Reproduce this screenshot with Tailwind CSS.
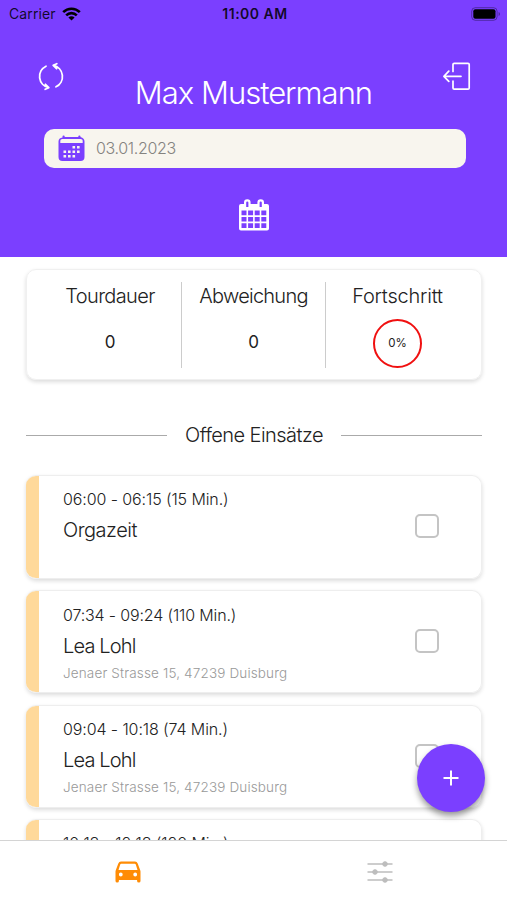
<!DOCTYPE html>
<html lang="de">
<head>
    <meta charset="UTF-8">
    <meta name="viewport" content="width=device-width, initial-scale=1.0">
    <script src="https://cdn.jsdelivr.net/npm/@tailwindcss/browser@4"></script>
    <title>Tour</title>
</head>
<body class="bg-white font-['Inter','Liberation_Sans',sans-serif] text-[#222]">
    <div class="relative flex flex-col w-[507px] h-[900px] overflow-hidden">

        <!-- Header -->
        <header class="shrink-0 h-[257px] bg-[#7b3fff] text-white">
            <div class="grid grid-cols-3 items-center h-[27px] pl-[9px] pr-[6px] text-black/85 text-[14px]">
                <div class="flex items-center gap-1.5">
                    <span class="whitespace-nowrap tracking-[0.1px]">Carrier</span>
                    <svg class="w-[19px] h-[14px]" viewBox="0 0 19 14" fill="none" stroke="#000" stroke-width="2.6">
                        <path d="M1.2 5.2a11.8 11.8 0 0 1 16.6 0M4.2 8.3a7.5 7.5 0 0 1 10.6 0"/>
                        <path d="M9.5 13.6 6.4 10.5a4.4 4.4 0 0 1 6.2 0z" fill="#000" stroke="none"/>
                    </svg>
                </div>
                <span class="text-center font-semibold tracking-[0.5px] whitespace-nowrap">11:00 AM</span>
                <svg class="justify-self-end w-[30px] h-[14px]" viewBox="0 0 30 14">
                    <rect x=".7" y=".7" width="25.4" height="12.6" rx="3.6" fill="none" stroke="#000" stroke-opacity=".35"/>
                    <rect x="2.3" y="2.3" width="22.2" height="9.4" rx="2" fill="#000"/>
                    <path d="M27.6 5v4c1.8-.8 1.8-3.2 0-4z" fill="#000" fill-opacity=".4"/>
                </svg>
            </div>

            <div class="flex justify-between h-[102px] pl-[38px] pr-[36px] pt-[35px]">
                <svg class="w-[26px] h-[29px]" viewBox="0 0 26 29" fill="none" stroke="#fff" stroke-width="1.8" stroke-linecap="round" stroke-linejoin="round">
                    <path d="M8 4.2A11.4 11.4 0 0 0 10.6 25.6M7.4 22.3l3.4 3.4-3.600 1.600"/>
                    <path d="M18 24.8A11.4 11.4 0 0 0 15.4 3.4M18.600 6.700l-3.400-3.400 3.600-1.600"/>
                </svg>
                <h1 class="pt-[11px] text-[31px] leading-[40px] font-[350] tracking-[-1px] whitespace-nowrap">Max Mustermann</h1>
                <svg class="w-[28px] h-[29px]" viewBox="0 0 28 29" fill="none" stroke="#fff" stroke-width="1.7" stroke-linecap="round" stroke-linejoin="round">
                    <path d="M10 9.5V2.5a1.2 1.2 0 0 1 1.2-1.2H25a1.2 1.2 0 0 1 1.2 1.2V26a1.2 1.2 0 0 1-1.2 1.2H11.2A1.2 1.2 0 0 1 10 26v-7"/>
                    <path d="M18 14.3H1.2M5.8 9.2l-4.9 5.1 4.9 5.1"/>
                </svg>
            </div>

            <div class="flex items-center ml-[44px] w-[422px] h-[39px] pl-[14px] rounded-[10px] bg-[#f8f5ee]">
                <svg class="w-[27px] h-[27px]" viewBox="0 0 27 27">
                    <path d="M4.5 2.5V1.6a1.1 1.1 0 0 1 2.2 0v.4h13.6v-.4a1.1 1.1 0 0 1 2.2 0v.4Q26.5 3 26.5 6.5V22q0 4-4 4h-18q-4 0-4-4V6.5q0-3.5 4-4z" fill="#7b3fff"/>
                    <path d="M2.3 8V5.8Q2.3 4 4.3 4h18.4q2 0 2 1.8V8z" fill="#f8f5ee"/>
                    <path d="M14.5 11h2.6v2.6h-2.6zM19 11h2.6v2.6H19zM5.5 15.5h2.6v2.6H5.5zM10 15.5h2.6v2.6H10zM14.5 15.5h2.6v2.6h-2.6zM19 15.5h2.6v2.6H19zM5.5 20h2.6v2.6H5.5zM10 20h2.6v2.6H10zM14.5 20h2.6v2.6h-2.6z" fill="#f8f5ee"/>
                </svg>
                <span class="pl-[11px] pb-0.5 text-[16px] font-[350] tracking-[-0.35px] text-[#858380]">03.01.2023</span>
            </div>

            <svg class="mx-auto mt-[31px] w-[30px] h-[32px]" viewBox="0 0 30 32">
                <path fill="#fff" fill-rule="evenodd" d="M2 5h3V3.5a3.3 3.3 0 0 1 6.6 0V5h6.8V3.5a3.3 3.3 0 0 1 6.6 0V5h3q2 0 2 2v22.500q0 2-2 2H2q-2 0-2-2V7q0-2 2-2zM7.200 3.500v4.500h2.200V3.500a1.100 1.100 0 0 0-2.200 0zM20.600 3.500v4.500h2.200V3.500a1.100 1.100 0 0 0-2.200 0zM2.500 11.500v4.700h5v-4.700zM9.100 11.500v4.700h5v-4.700zM15.700 11.500v4.700h5v-4.700zM22.300 11.500v4.700h5v-4.700zM2.500 18v4.500h5V18zM9.100 18v4.500h5V18zM15.700 18v4.500h5V18zM22.300 18v4.500h5V18zM2.500 24.300v4.700h5v-4.700zM9.100 24.300v4.700h5v-4.700zM15.700 24.300v4.700h5v-4.700zM22.300 24.300v4.700h5v-4.700z"/>
            </svg>
        </header>

        <main class="grow min-h-0 overflow-hidden pl-[26px] pr-[25px] pt-3">
            <!-- Tour stats -->
            <section class="grid grid-cols-[143px_144px_143px] justify-center h-[111px] py-3 rounded-[10px] border border-[#f0f0f0] shadow-[0_2px_4px_rgba(0,0,0,0.14)] text-center">
                <div class="border-r border-[#ccc]">
                    <div class="text-[20px] leading-[28px] font-[350] tracking-[-0.65px]">Tourdauer</div>
                    <div class="mt-[20px] text-[17px] leading-6">0</div>
                </div>
                <div class="border-r border-[#ccc]">
                    <div class="text-[20px] leading-[28px] font-[350] tracking-[-0.75px]">Abweichung</div>
                    <div class="mt-[20px] text-[17px] leading-6">0</div>
                </div>
                <div>
                    <div class="text-[20px] leading-[28px] font-[350] tracking-[-0.2px]">Fortschritt</div>
                    <div class="flex items-center justify-center mx-auto mt-[9px] w-[49px] h-[49px] rounded-full border-[2.5px] border-[#f01010] text-[11.5px]">0%</div>
                </div>
            </section>

            <div class="flex items-center justify-between mt-[40px] h-[30px]">
                <div class="w-[141px] h-px bg-[#aaa]"></div>
                <h2 class="text-[20px] font-[350] tracking-[-0.55px] whitespace-nowrap">Offene Einsätze</h2>
                <div class="w-[141px] h-px bg-[#aaa]"></div>
            </div>

            <!-- Open visits -->
            <div class="flex flex-col gap-3 mt-[25px]">
                <article class="flex shrink-0 h-[104px] -mb-px rounded-[10px] border-y border-r border-[#eee] overflow-hidden shadow-[0_2px_4px_rgba(0,0,0,0.14)]">
                    <div class="w-[13px] bg-[#ffd99a]"></div>
                    <div class="grow pl-[24px] pt-[11px]">
                        <div class="text-[16px] leading-6 font-[350] tracking-[-0.1px]">06:00 - 06:15 (15 Min.)</div>
                        <div class="mt-1 text-[20px] leading-[30px] font-[350] tracking-[-0.5px]">Orgazeit</div>
                    </div>
                    <div class="mt-[38px] mr-[42px] w-6 h-6 rounded-[5px] border-2 border-[#c4c4c4]"></div>
                </article>
                <article class="flex shrink-0 h-[103px] rounded-[10px] border-y border-r border-[#eee] overflow-hidden shadow-[0_2px_4px_rgba(0,0,0,0.14)]">
                    <div class="w-[13px] bg-[#ffd99a]"></div>
                    <div class="grow pl-[24px] pt-[12px]">
                        <div class="text-[16px] leading-6 font-[350] tracking-[-0.15px]">07:34 - 09:24 (110 Min.)</div>
                        <div class="mt-1 text-[20px] leading-[30px] font-[350] tracking-[-0.85px]">Lea Lohl</div>
                        <div class="mt-[2px] text-[13.5px] leading-5 font-[350] tracking-[0.15px] text-[#999]">Jenaer Strasse 15, 47239 Duisburg</div>
                    </div>
                    <div class="mt-[38px] mr-[42px] w-6 h-6 rounded-[5px] border-2 border-[#c4c4c4]"></div>
                </article>
                <article class="flex shrink-0 h-[103px] -mb-px rounded-[10px] border-y border-r border-[#eee] overflow-hidden shadow-[0_2px_4px_rgba(0,0,0,0.14)]">
                    <div class="w-[13px] bg-[#ffd99a]"></div>
                    <div class="grow pl-[24px] pt-[11px]">
                        <div class="text-[16px] leading-6 font-[350] tracking-[-0.1px]">09:04 - 10:18 (74 Min.)</div>
                        <div class="mt-1 text-[20px] leading-[30px] font-[350] tracking-[-0.85px]">Lea Lohl</div>
                        <div class="mt-[2px] text-[13.5px] leading-5 font-[350] tracking-[0.15px] text-[#999]">Jenaer Strasse 15, 47239 Duisburg</div>
                    </div>
                    <div class="mt-[38px] mr-[42px] w-6 h-6 rounded-[5px] border-2 border-[#c4c4c4]"></div>
                </article>
                <article class="flex shrink-0 h-[103px] rounded-[10px] border-y border-r border-[#eee] overflow-hidden shadow-[0_2px_4px_rgba(0,0,0,0.14)]">
                    <div class="w-[13px] bg-[#ffd99a]"></div>
                    <div class="grow pl-[24px] pt-[11px]">
                        <div class="text-[16px] leading-6 font-[350] tracking-[-0.1px]">10:18 - 12:18 (120 Min.)</div>
                    </div>
                </article>
            </div>
        </main>

        <!-- Tab bar -->
        <nav class="shrink-0 grid grid-cols-2 justify-items-center h-[60px] pt-5 bg-white border-t border-[#d4d4d4]">
            <svg class="ml-0.5 w-[26px] h-[22px]" viewBox="0 0 26 22">
                <path fill="#ff8c05" fill-rule="evenodd" d="M6 .5h14q2 0 2.700 2l2.600 7q.2.600.2 1.200V20q0 1.500-1.700 1.500t-1.700-1.500v-1H3.900v1q0 1.500-1.700 1.500T.5 20v-9.300q0-.6.200-1.200l2.600-7Q4 .5 6 .5zM6.300 2.700q-.8 0-1.100.9L3.500 9h19l-1.700-5.400q-.3-.9-1.100-.9zM5.800 11.600a1.900 1.900 0 1 0 0 3.800 1.900 1.900 0 0 0 0-3.800zM20.200 11.600a1.900 1.900 0 1 0 0 3.800 1.900 1.900 0 0 0 0-3.800z"/>
            </svg>
            <svg class="w-[26px] h-[22px]" viewBox="0 0 26 22" fill="#bdbdbd" stroke="#bdbdbd">
                <path d="M.5 3H25.5M.5 11H25.5M.5 19H25.5" stroke-width="1.7"/>
                <circle cx="18" cy="3" r="2.3"/>
                <circle cx="8" cy="11" r="2.3"/>
                <circle cx="18" cy="19" r="2.3"/>
            </svg>
        </nav>

        <!-- Add button -->
        <button class="absolute left-[417px] top-[744px] flex items-center justify-center w-[68px] h-[68px] rounded-full bg-[#7b3fff] shadow-[0_4px_6px_rgba(0,0,0,0.4)]">
            <svg class="w-4 h-4" viewBox="0 0 16 16" stroke="#fff" stroke-width="2"><path d="M8 .5v15M.5 8h15"/></svg>
        </button>
    </div>
</body>
</html>
